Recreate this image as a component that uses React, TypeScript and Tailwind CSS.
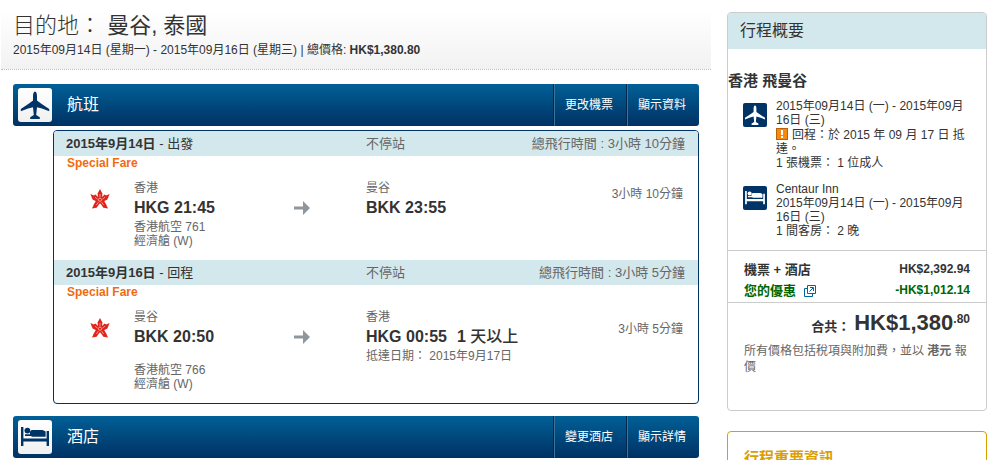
import type { ReactNode } from "react";

type Flight = {
  date: string;
  direction: string;
  total: string;
  duration: string;
  from: string;
  departs: string;
  to: string;
  arrives: string;
  dayShift?: string;
  arrivalDate?: string;
  carrier: string;
  cabin: string;
};

const flights: Flight[] = [
  {
    date: "2015年9月14日",
    direction: "出發",
    total: "3小時 10分鐘",
    duration: "3小時 10分鐘",
    from: "香港",
    departs: "HKG 21:45",
    to: "曼谷",
    arrives: "BKK 23:55",
    carrier: "香港航空 761",
    cabin: "經濟艙 (W)",
  },
  {
    date: "2015年9月16日",
    direction: "回程",
    total: "3小時 5分鐘",
    duration: "3小時 5分鐘",
    from: "曼谷",
    departs: "BKK 20:50",
    to: "香港",
    arrives: "HKG 00:55",
    dayShift: "天以上",
    arrivalDate: "抵達日期： 2015年9月17日",
    carrier: "香港航空 766",
    cabin: "經濟艙 (W)",
  },
];

function PlaneIcon({ className }: { className: string }) {
  return (
    <svg viewBox="0 0 34 34" className={className} fill="currentColor" aria-hidden="true">
      <path d="M17 3.6C18.4 3.6 19 6.2 19 8.4V12.6L23 15.6L31.2 21V23.2L24 20.4L19 19.2L18.2 27L21.8 29.2V31H12.2V29.2L15.8 27L15 19.2L10 20.4L2.8 23.2V21L11 15.6L15 12.6V8.4C15 6.2 15.6 3.6 17 3.6Z" />
    </svg>
  );
}

function BedIcon({ className }: { className: string }) {
  return (
    <svg viewBox="0 0 34 34" className={className} fill="currentColor" aria-hidden="true">
      <path d="M3 7H5.4V18.4H28.6V11H31V26H28.6V21.6H5.4V26H3Z" />
      <circle cx="9.4" cy="10.6" r="2.9" />
      <path d="M7 14.2H12V11.8L13.6 10H24.6L27.6 11.4V16.8H14.4L12.6 16H7Z" />
    </svg>
  );
}

function AirlineLogo() {
  return (
    <svg viewBox="0 0 20 20" className="mt-2 h-5 w-5" aria-hidden="true">
      <g fill="#e1251b">
        <path d="M10 0L12.4 4.4L12 8.4H8L7.6 4.4Z" />
        <path d="M19.6 5L17.4 10.4L13.4 12.6L10.4 11.4L12 8L14.6 5.4L16.2 6.4Z" />
        <path d="M0.4 5L2.6 10.4L6.6 12.6L9.6 11.4L8 8L5.4 5.4L3.8 6.4Z" />
        <path d="M18 19.4L13.4 18.8L10.4 14.4V11L14.2 12L16.2 15.4Z" />
        <path d="M2 19.4L6.6 18.8L9.6 14.4V11L5.8 12L3.8 15.4Z" />
        <circle cx="10" cy="11" r="3.4" />
      </g>
      <g stroke="#f7b5af" strokeWidth="0.8" fill="none">
        <path d="M10 8.4V5M12.4 10.2L15 8.2M7.6 10.2L5 8.2M11.6 13.2L13.6 16M8.4 13.2L6.4 16" />
        <circle cx="10" cy="10.8" r="1.6" />
      </g>
    </svg>
  );
}

function ArrowIcon() {
  return (
    <svg viewBox="0 0 16 14" className="mt-5 h-3.5 w-4" fill="#8f979d" aria-hidden="true">
      <path d="M0 5.5H9V0L16 7L9 14V8.5H0Z" />
    </svg>
  );
}

function WarningIcon() {
  return (
    <svg viewBox="0 0 12 12" className="mr-1 inline-block h-3 w-3 align-[-1px]" aria-hidden="true">
      <rect x="0.5" y="0.5" width="11" height="11" fill="#f7890f" stroke="#b8620a" />
      <path d="M5 2H7V7H5ZM5 8H7V10H5Z" fill="#fff" />
    </svg>
  );
}

function PopupIcon() {
  return (
    <svg viewBox="0 0 12 12" className="h-3 w-3" fill="none" stroke="#006699" aria-hidden="true">
      <path d="M3.5 0.5H11.5V8.5H3.5ZM3 3.5H0.5V11.5H8.5V9M5.5 6.5L9 3M6 2.5H9.5V6" />
    </svg>
  );
}

function SectionBar({ title, icon, actions }: { title: string; icon: ReactNode; actions: string[] }) {
  return (
    <div className="flex h-[42px] overflow-hidden rounded-[3px] bg-linear-to-b from-[#006097] to-[#003264] text-white">
      <div className="my-1 ml-[5px] h-[34px] w-[34px] rounded-[3px] bg-linear-to-b from-white to-[#f0f0f0] text-[#003366]">
        {icon}
      </div>
      <h2 className="ml-[15px] flex-1 text-[16px] leading-[42px]">{title}</h2>
      {actions.map((action) => (
        <button
          key={action}
          type="button"
          className="border-l border-[#00284f] pr-[13px] pl-[11px] text-[12px] shadow-[inset_1px_0_0_#3d7396]"
        >
          {action}
        </button>
      ))}
    </div>
  );
}

function FlightLeg({ flight }: { flight: Flight }) {
  return (
    <article>
      <div className="grid h-[25px] grid-cols-[300px_1fr_auto] bg-[#d3e8ec] pr-[13px] pl-3 text-[13px] leading-[25px] text-[#666]">
        <h3 className="text-[#333]">
          <b>{flight.date}</b> - {flight.direction}
        </h3>
        <span>不停站</span>
        <span>總飛行時間 : {flight.total}</span>
      </div>
      <p className="pl-[13px] text-[12px] leading-[14px] font-bold text-[#f26a0f]">Special Fare</p>
      <div className="grid grid-cols-[44px_160px_72px_1fr_auto] pt-[11px] pr-[15px] pb-3 pl-9 text-[12px] leading-[14px] text-[#666]">
        <AirlineLogo />
        <div>
          <p>{flight.from}</p>
          <p className="text-[16px] leading-[25px] font-bold text-[#333]">{flight.departs}</p>
          <p className={flight.arrivalDate ? "pt-[14px]" : ""}>{flight.carrier}</p>
          <p>{flight.cabin}</p>
        </div>
        <ArrowIcon />
        <div>
          <p>{flight.to}</p>
          <p className="text-[16px] leading-[25px] font-bold text-[#333]">
            {flight.arrives}
            {flight.dayShift && (
              <span className="ml-2.5">
                1 <span className="font-medium">{flight.dayShift}</span>
              </span>
            )}
          </p>
          {flight.arrivalDate && <p>{flight.arrivalDate}</p>}
        </div>
        <p className={flight.arrivalDate ? "pt-3" : "pt-1.5"}>{flight.duration}</p>
      </div>
    </article>
  );
}

function SummaryItem({ icon, children }: { icon: ReactNode; children: ReactNode }) {
  return (
    <div className="flex gap-[9px] pr-4 pl-[15px] text-[12px] leading-[14px]">
      <div className="mt-1 h-6 w-6 shrink-0 rounded-[2px] bg-[#003366] text-white">{icon}</div>
      <div>{children}</div>
    </div>
  );
}

function TripSummary() {
  return (
    <section className="rounded border border-[#ccc] pb-[35px]">
      <h2 className="h-9 rounded-t-[3px] bg-[#d3e8ec] pl-3 text-[16px] leading-9">行程概要</h2>
      <h3 className="mt-[22px] text-[15px] leading-5 font-bold">香港 飛曼谷</h3>
      <div className="mt-2 space-y-3 pb-3">
        <SummaryItem icon={<PlaneIcon className="h-6 w-6" />}>
          <p>2015年09月14日 (一) - 2015年09月16日 (三)</p>
          <p className="pt-px">
            <WarningIcon />
            回程：於 2015 年 09 月 17 日 抵達。
          </p>
          <p>1 張機票： 1 位成人</p>
        </SummaryItem>
        <SummaryItem icon={<BedIcon className="h-6 w-6" />}>
          <p>Centaur Inn</p>
          <p>2015年09月14日 (一) - 2015年09月16日 (三)</p>
          <p>1 間客房： 2 晚</p>
        </SummaryItem>
      </div>
      <dl className="grid grid-cols-[1fr_auto] border-y border-[#ccc] pt-2 pr-4 pb-px pl-4 text-[12px] leading-[21px] font-bold">
        <dt className="text-[13px]">機票 + 酒店</dt>
        <dd className="text-right">HK$2,392.94</dd>
        <dt className="flex items-center gap-2 text-[13px] text-[#006600]">
          您的優惠
          <a href="#discount" aria-label="您的優惠">
            <PopupIcon />
          </a>
        </dt>
        <dd className="text-right text-[#006600]">-HK$1,012.14</dd>
      </dl>
      <p className="flex justify-end pt-1 pr-4 leading-8 font-bold">
        <span className="pt-1 text-[13px] leading-8">合共：</span>
        <span className="ml-1 text-[22px]">HK$1,380</span>
        <span className="text-[12px] leading-6">.80</span>
      </p>
      <p className="pr-4 pl-4 text-[12px] leading-4 text-[#666]">
        所有價格包括稅項與附加費，並以 <b>港元</b> 報價
      </p>
    </section>
  );
}

export default function App() {
  return (
    <div className="h-screen overflow-hidden bg-white font-['Liberation_Sans','Noto_Sans_CJK_TC',sans-serif] text-[#333]">
      <div className="flex items-start gap-4 pr-3.5 pl-px">
        <main className="min-w-0 flex-1">
          <header className="border-b border-dotted border-[#bbb] bg-linear-to-b from-white from-15% to-[#f2f2f2] px-3 pt-2.5 pb-[11px]">
            <h1 className="text-[22px] leading-8 font-normal">
              <span className="font-light">目的地：</span> 曼谷, 泰國
            </h1>
            <p className="text-[12px] leading-4">
              2015年09月14日 (星期一) - 2015年09月16日 (星期三) | 總價格: <b>HK$1,380.80</b>
            </p>
          </header>

          <div className="px-3 pt-3.5">
            <SectionBar
              title="航班"
              icon={<PlaneIcon className="h-[34px] w-[34px]" />}
              actions={["更改機票", "顯示資料"]}
            />
            <div className="mt-1 mb-3 ml-10 overflow-hidden rounded border border-[#003366]">
              {flights.map((flight) => (
                <FlightLeg key={flight.date} flight={flight} />
              ))}
            </div>
            <SectionBar
              title="酒店"
              icon={<BedIcon className="h-[34px] w-[34px]" />}
              actions={["變更酒店", "顯示詳情"]}
            />
          </div>
        </main>

        <aside className="w-[260px] shrink-0 space-y-5 pt-3">
          <TripSummary />
          <section className="rounded border border-[#dba000] px-4 pt-4 pb-6">
            <h2 className="text-[15px] leading-5 font-bold text-[#dba000]">行程重要資訊</h2>
          </section>
        </aside>
      </div>
    </div>
  );
}
